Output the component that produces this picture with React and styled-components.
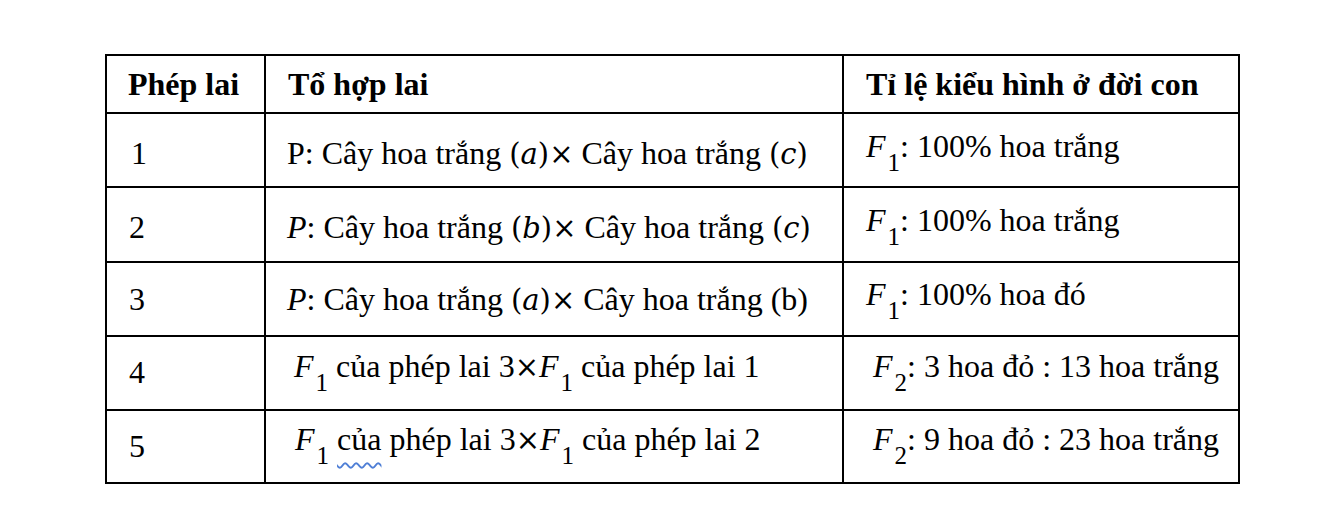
import React from "react";
import styled, { createGlobalStyle } from "styled-components";

const Global = createGlobalStyle`
  html, body { margin: 0; padding: 0; background: #ffffff; }
  body { font-family: "Liberation Serif", "Times New Roman", serif; color: #000; }
`;

const Page = styled.div`
  width: 1336px;
  height: 514px;
  box-sizing: border-box;
  padding: 54px 0 0 105px;
  background: #fff;
`;

const Grid = styled.div`
  display: grid;
  grid-template-columns: 159px 578px 396px;
  grid-template-rows: 58px 74px 75px 74px 74px 73px;
  border-top: 2px solid #000;
  border-left: 2px solid #000;
  width: 1135px;
  box-sizing: border-box;
`;

const Cell = styled.div`
  box-sizing: border-box;
  border-right: 2px solid #000;
  border-bottom: 2px solid #000;
  padding: ${(p) => p.$pt}px 0 0 ${(p) => p.$pl}px;
  font-size: 32px;
  line-height: 36px;
  white-space: nowrap;
  font-weight: ${(p) => (p.$head ? 700 : 400)};
`;

const Var = styled.span`
  font-style: italic;
`;

const Math = styled.span`
  font-family: "DejaVu Serif", "Liberation Serif", serif;
  font-size: 29px;
`;

const MathVar = styled.span`
  font-family: "DejaVu Serif", "Liberation Serif", serif;
  font-style: italic;
  font-size: 29px;
`;

const Sub = styled.span`
  font-size: 25px;
  position: relative;
  top: 14px;
  margin-left: 2px;
  line-height: 0;
`;

const Squiggle = styled.span`
  text-decoration: underline wavy #4f7fd6;
  text-decoration-thickness: 1.5px;
  text-underline-offset: 12px;
`;

const F = ({ n }) => (
  <>
    <Var>F</Var>
    <Sub>{n}</Sub>
  </>
);

const Paren = ({ v }) => (
  <Math>
    (<MathVar>{v}</MathVar>)
  </Math>
);

const Times = () => <Math>×</Math>;

export default function App() {
  return (
    <Page>
      <Global />
      <Grid>
        <Cell $head $pt={10} $pl={21}>Phép lai</Cell>
        <Cell $head $pt={10} $pl={22}>Tổ hợp lai</Cell>
        <Cell $head $pt={10} $pl={22}>Tỉ lệ kiểu hình ở đời con</Cell>

        <Cell $pt={21} $pl={24}>1</Cell>
        <Cell $pt={21} $pl={21}>
          P: Cây hoa trắng <Paren v="a" /><Times /> Cây hoa trắng <Paren v="c" />
        </Cell>
        <Cell $pt={14} $pl={22}>
          <F n="1" />: 100% hoa trắng
        </Cell>

        <Cell $pt={21} $pl={22}>2</Cell>
        <Cell $pt={21} $pl={21}>
          <Var>P</Var>: Cây hoa trắng <Paren v="b" /><Times /> Cây hoa trắng <Paren v="c" />
        </Cell>
        <Cell $pt={14} $pl={22}>
          <F n="1" />: 100% hoa trắng
        </Cell>

        <Cell $pt={18} $pl={22}>3</Cell>
        <Cell $pt={18} $pl={21}>
          <Var>P</Var>: Cây hoa trắng <Paren v="a" /><Times /> Cây hoa trắng (b)
        </Cell>
        <Cell $pt={13} $pl={22}>
          <F n="1" />: 100% hoa đó
        </Cell>

        <Cell $pt={17} $pl={22}>4</Cell>
        <Cell $pt={11} $pl={28}>
          <F n="1" /> của phép lai 3<Times /><F n="1" /> của phép lai 1
        </Cell>
        <Cell $pt={11} $pl={29}>
          <F n="2" />: 3 hoa đỏ : 13 hoa trắng
        </Cell>

        <Cell $pt={17} $pl={22}>5</Cell>
        <Cell $pt={10} $pl={29}>
          <F n="1" /> <Squiggle>của</Squiggle> phép lai 3<Times /><F n="1" /> của phép lai 2
        </Cell>
        <Cell $pt={10} $pl={29}>
          <F n="2" />: 9 hoa đỏ : 23 hoa trắng
        </Cell>
      </Grid>
    </Page>
  );
}
